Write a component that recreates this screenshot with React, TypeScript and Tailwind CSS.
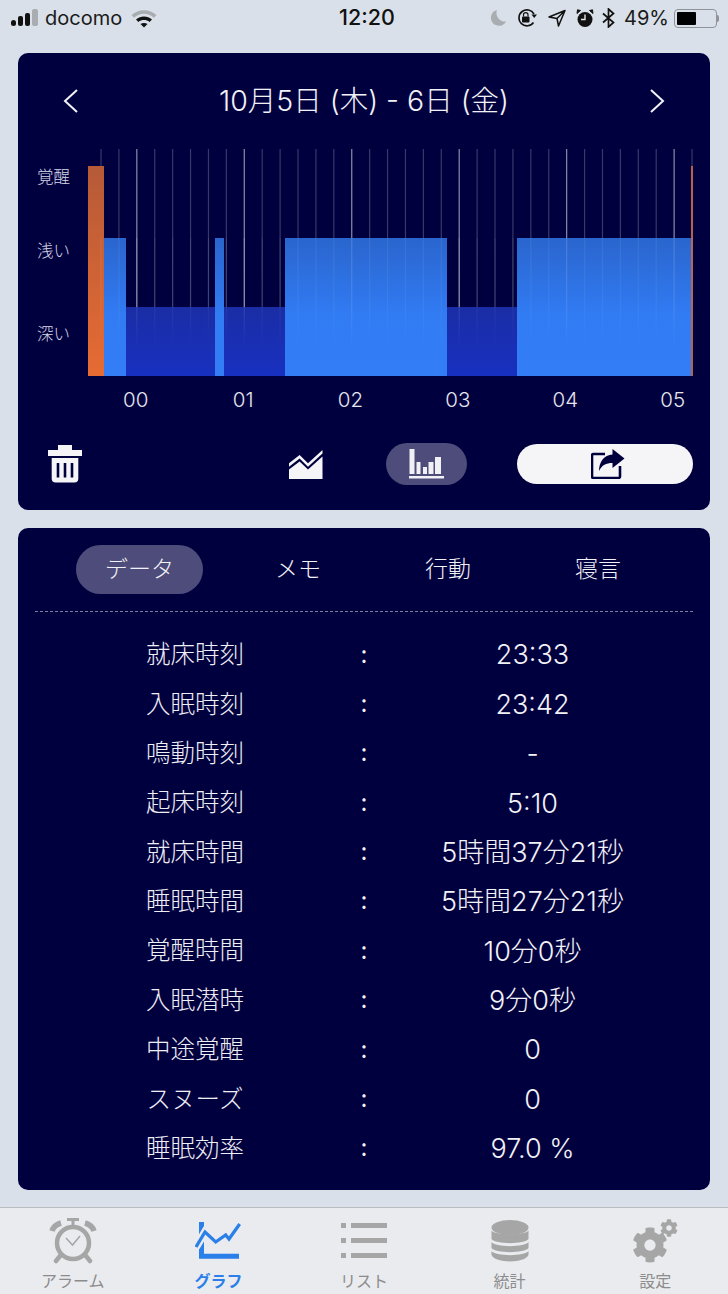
import React from "react";
import { FaCog } from "react-icons/fa";

const font = { fontFamily: '"Inter","Noto Sans CJK JP",sans-serif' };

const lines = Array.from({ length: 34 }, (_, i) => 13 + i * 17.91);

const bars = (
  <>
    <rect x="0" y="17" width="16" height="210" fill="url(#orangeB)" />
    <rect x="16" y="89" width="22" height="138" fill="url(#lightB)" />
    <rect x="38" y="158" width="89" height="69" fill="url(#deepB)" />
    <rect x="127" y="89" width="9" height="138" fill="url(#lightB)" />
    <rect x="136" y="158" width="61" height="69" fill="url(#deepB)" />
    <rect x="197" y="89" width="162" height="138" fill="url(#lightB)" />
    <rect x="359" y="158" width="70" height="69" fill="url(#deepB)" />
    <rect x="429" y="89" width="174" height="138" fill="url(#lightB)" />
    <rect x="603" y="17" width="2" height="210" fill="#b8604e" />
  </>
);

const Chart = () => (
  <svg width="606" height="227" viewBox="0 0 606 227" className="block shrink-0">
    <defs>
      <linearGradient id="lightB" x1="0" y1="89" x2="0" y2="227" gradientUnits="userSpaceOnUse">
        <stop offset="0" stopColor="#2a65cd" />
        <stop offset="0.55" stopColor="#317bf3" />
        <stop offset="1" stopColor="#337df7" />
      </linearGradient>
      <linearGradient id="deepB" x1="0" y1="158" x2="0" y2="227" gradientUnits="userSpaceOnUse">
        <stop offset="0" stopColor="#1a2da5" />
        <stop offset="1" stopColor="#1830c0" />
      </linearGradient>
      <linearGradient id="orangeB" x1="0" y1="17" x2="0" y2="227" gradientUnits="userSpaceOnUse">
        <stop offset="0" stopColor="#b65a38" />
        <stop offset="1" stopColor="#e66b33" />
      </linearGradient>
      <linearGradient id="fade" x1="0" y1="0" x2="0" y2="227" gradientUnits="userSpaceOnUse">
        <stop offset="0.35" stopColor="#ffffff" stopOpacity="0.07" />
        <stop offset="0.7" stopColor="#ffffff" stopOpacity="0.05" />
        <stop offset="0.88" stopColor="#ffffff" stopOpacity="0" />
      </linearGradient>
      <linearGradient id="fadeB" x1="0" y1="0" x2="0" y2="227" gradientUnits="userSpaceOnUse">
        <stop offset="0.35" stopColor="#ffffff" stopOpacity="0.16" />
        <stop offset="0.7" stopColor="#ffffff" stopOpacity="0.1" />
        <stop offset="0.88" stopColor="#ffffff" stopOpacity="0" />
      </linearGradient>
    </defs>
    {lines.map((x, i) => (
      <line key={i} x1={x} x2={x} y1="0" y2="227" stroke="#ffffff" strokeOpacity={i % 6 === 2 ? 0.55 : 0.22} strokeWidth="1.2" />
    ))}
    {bars}
    {lines.map((x, i) => (
      <line key={i} x1={x} x2={x} y1="89" y2="227" stroke={i % 6 === 2 ? "url(#fadeB)" : "url(#fade)"} strokeWidth="1.2" />
    ))}
  </svg>
);

const rows: [string, string][] = [
  ["就床時刻", "23:33"],
  ["入眠時刻", "23:42"],
  ["鳴動時刻", "-"],
  ["起床時刻", "5:10"],
  ["就床時間", "5時間37分21秒"],
  ["睡眠時間", "5時間27分21秒"],
  ["覚醒時間", "10分0秒"],
  ["入眠潜時", "9分0秒"],
  ["中途覚醒", "0"],
  ["スヌーズ", "0"],
  ["睡眠効率", "97.0 %"],
];

const Chevron = ({ right }: { right?: boolean }) => (
  <svg width="16" height="24" viewBox="0 0 16 24" fill="none" stroke="#f2f2f6" strokeWidth="2">
    <path d={right ? "M2 1 L14 12 L2 23" : "M14 1 L2 12 L14 23"} />
  </svg>
);

const StatusBar = () => (
  <div className="h-[53px] pb-[17px] pl-[11px] pr-[9px] flex items-center justify-between text-[#111]">
    <div className="flex items-center w-[236px]">
      <svg width="28" height="18" viewBox="0 0 28 18">
        <rect x="0" y="11" width="5" height="6" rx="2.5" fill="#111" />
        <rect x="7" y="7" width="5" height="10" rx="2" fill="#111" />
        <rect x="14" y="4" width="5" height="13" rx="2" fill="#111" />
        <rect x="21" y="0" width="6" height="17" rx="2" fill="#a9adb2" />
      </svg>
      <span className="ml-[6px] text-[20px] leading-none font-normal text-[#1a1a1a]">docomo</span>
      <svg width="26" height="19" viewBox="0 0 26 19" className="ml-[9px]">
        <path d="M0.5 6 C7.5 -0.5 18.5 -0.5 25.5 6 L23 8.7 C17 3.4 9 3.4 3 8.7 Z" fill="#a9adb2" />
        <path d="M5 10.5 C9.5 6.5 16.5 6.5 21 10.5 L18.6 13 C15.5 10.4 10.5 10.4 7.4 13 Z" fill="#111" />
        <path d="M9.5 15 C11.5 13.5 14.5 13.5 16.5 15 L13 18.5 Z" fill="#111" />
      </svg>
    </div>
    <div className="text-[21.5px] leading-none font-medium text-[#111]">12:20</div>
    <div className="flex items-center justify-end w-[232px]">
      <svg width="18" height="18" viewBox="0 0 18 18">
        <path d="M8 1 A8 8 0 1 0 17 12.5 A8.5 8.5 0 0 1 8 1 Z" fill="#a9adb2" />
      </svg>
      <svg width="22" height="20" viewBox="0 0 22 20" className="ml-[9px]" fill="none">
        <path d="M17.5 14.5 A8 8 0 1 1 18 6" stroke="#111" strokeWidth="1.6" />
        <path d="M15.5 6.5 L21 6.5 L18.2 10 Z" fill="#111" />
        <rect x="6" y="8.5" width="7.5" height="6" rx="1" fill="#111" />
        <path d="M7.5 8.5 V6.8 A2.2 2.2 0 0 1 12 6.8 V8.5" stroke="#111" strokeWidth="1.2" />
      </svg>
      <svg width="18" height="18" viewBox="0 0 18 18" className="ml-[10px]" fill="none">
        <path d="M17 1.5 L1 8 L9 9.5 L10.5 17 Z M17 1.5 L9 9.5" stroke="#111" strokeWidth="1.5" strokeLinejoin="round" />
      </svg>
      <svg width="18" height="19" viewBox="0 0 18 19" className="ml-[10px]">
        <circle cx="9" cy="10.5" r="7.5" fill="#111" />
        <path d="M9 5.5 V10.5 H5" stroke="#e3e6ec" strokeWidth="1.4" fill="none" />
        <path d="M1 4.5 L4.5 1.5 L1.5 0.8 Z M17 4.5 L13.5 1.5 L16.5 0.8 Z" fill="#111" stroke="#111" />
      </svg>
      <svg width="13" height="20" viewBox="0 0 13 20" className="ml-[8px]" fill="none">
        <path d="M1 5.5 L11.5 14.5 L6.5 19 V1 L11.5 5.5 L1 14.5" stroke="#111" strokeWidth="1.7" />
      </svg>
      <span className="ml-[9px] text-[20px] leading-none text-[#1a1a1a]">49%</span>
      <div className="ml-[5px] w-[45px] h-[19px] flex items-center">
        <div className="w-[43px] h-[19px] rounded-[4px] border border-[#8f9296] p-[2px]">
          <div className="w-[19px] h-full rounded-[1px] bg-black" />
        </div>
        <div className="w-[2px] h-[7px] bg-[#8f9296] rounded-r-[2px]" />
      </div>
    </div>
  </div>
);

const Tab = ({ label, active, children }: { label: string; active?: boolean; children: React.ReactNode }) => (
  <div className="flex flex-col items-center pt-[9px]">
    <div className="h-[48px] flex items-center justify-center">{children}</div>
    <span className={`mt-[5px] text-[16px] leading-[22px] ${active ? "font-bold text-[#2b7fe8]" : "text-[#8c8c8c]"}`}>{label}</span>
  </div>
);

export default function App() {
  return (
    <div style={font} className="w-[728px] h-[1294px] overflow-hidden bg-[#d9e0e9] flex flex-col">
      <StatusBar />
      <div className="mx-[18px] rounded-[10px] bg-[#01003f] pb-[25px]">
        <div className="h-[96px] flex items-center">
          <div className="ml-[45px]"><Chevron /></div>
          <div className="flex-1 text-center text-[28.5px] leading-none font-light text-[#f2f2f6]">10月5日 (木) - 6日 (金)</div>
          <div className="mr-[45px]"><Chevron right /></div>
        </div>
        <div className="flex">
          <div className="w-[70px] flex flex-col pt-[17px] items-start pl-[19px] text-[16.5px] leading-[22px] text-[#d8d8e4] font-light">
            <span>覚醒</span>
            <span className="mt-[52px]">浅い</span>
            <span className="mt-[61px]">深い</span>
          </div>
          <Chart />
        </div>
        <div className="h-[48px] flex items-center pl-[64px] text-[20.5px] font-light text-[#e6e6ee]">
          {["00", "01", "02", "03", "04", "05"].map((h) => (
            <div key={h} className="w-[107.4px] shrink-0 text-center">{h}</div>
          ))}
        </div>
        <div className="mt-[19px] h-[42px] flex items-center">
          <svg width="34" height="38" viewBox="0 0 34 38" className="ml-[30px]">
            <path d="M10 0 H24 V5 H34 V11 H0 V5 H10 Z" fill="#f5f5f7" />
            <path d="M3.7 13 H30.3 V33.5 Q30.3 37.5 26.3 37.5 H7.7 Q3.7 37.5 3.7 33.5 Z" fill="#f5f5f7" />
            <rect x="8.7" y="18" width="2.6" height="14.5" fill="#01003f" />
            <rect x="15.7" y="18" width="2.6" height="14.5" fill="#01003f" />
            <rect x="22.7" y="18" width="2.6" height="14.5" fill="#01003f" />
          </svg>
          <svg width="34" height="29" viewBox="0 0 34 29" className="ml-[207px]">
            <path d="M0 13.3 L10.6 5 L19 13.3 L33.5 0 V3.5 L19 16.8 L10.6 8.5 L0 16.8 Z" fill="#f5f5f7" />
            <path d="M0 19.5 L10.6 11.5 L19 19.5 L33.5 6.5 V29 H0 Z" fill="#f5f5f7" />
          </svg>
          <div className="ml-[63px] w-[81px] h-[42px] rounded-full bg-[#4e4c7a] flex items-center justify-center">
            <svg width="36" height="30" viewBox="0 0 36 30">
              <rect x="0.5" y="0" width="5" height="25" fill="#f0f0f5" />
              <rect x="7.5" y="13" width="4" height="12" fill="#f0f0f5" />
              <rect x="14" y="18" width="4" height="7" fill="#f0f0f5" />
              <rect x="19.5" y="13" width="5" height="12" fill="#f0f0f5" />
              <rect x="26" y="8" width="6" height="17" fill="#f0f0f5" />
              <rect x="0" y="27" width="35" height="2.5" fill="#f0f0f5" />
            </svg>
          </div>
          <div className="ml-[50px] w-[176px] h-[40px] rounded-full bg-[#f5f5f7] flex items-center justify-center pl-[6px]">
            <svg width="34" height="30" viewBox="0 0 34 30">
              <path d="M14 5 H2.5 Q1 5 1 6.5 V27.5 Q1 29 2.5 29 H27 Q29 29 29 27.5 V17" fill="none" stroke="#01003f" strokeWidth="2.6" />
              <path d="M21.5 0 L33.5 9.5 L21.5 19 V14 C15 14 11 16 8 22 C8 13 13 6 21.5 5.5 Z" fill="#01003f" />
            </svg>
          </div>
        </div>
      </div>
      <div className="mx-[18px] mt-[18px] rounded-[10px] bg-[#01003f] pt-[17px] pb-[17px] text-[#f2f2f6]">
        <div className="h-[49px] flex items-center text-[23px] font-light">
          <div className="ml-[58px] w-[127px] h-[49px] rounded-full bg-[#4e4c7a] flex items-center justify-center">データ</div>
          <div className="w-[190px] text-center">メモ</div>
          <div className="w-[110px] text-center">行動</div>
          <div className="w-[190px] text-center">寝言</div>
        </div>
        <div className="mx-[17px] mt-[17px] border-t border-dashed border-[#7f7e9f]" />
        <div className="mt-[18px] flex flex-col">
          {rows.map(([k, v]) => (
            <div key={k} className="h-[49.36px] grid grid-cols-[322px_48px_322px] items-center font-light">
              <div className="pl-[32px] text-center text-[24.5px] text-[#eeeef4]">{k}</div>
              <div className="text-center text-[24px] font-normal">:</div>
              <div className="pr-[33px] pt-[2px] text-center text-[27px]">{v}</div>
            </div>
          ))}
        </div>
      </div>
      <div className="mt-[17px] h-[87px] border-t border-[#b8bcc0] bg-[#e9ebef] grid grid-cols-5">
        <Tab label="アラーム">
          <svg width="48" height="46" viewBox="0 0 48 46" fill="none">
            <circle cx="24" cy="25" r="16" stroke="#a6a6a6" strokeWidth="4.5" />
            <path d="M3 13 Q5 7 12 5 M45 13 Q43 7 36 5" stroke="#a6a6a6" strokeWidth="5.5" />
            <path d="M18 1.5 H30 M24 1 V8" stroke="#a6a6a6" strokeWidth="3" />
            <path d="M11 38 L7 43 M37 38 L41 43" stroke="#a6a6a6" strokeWidth="4.5" strokeLinecap="round" />
            <path d="M17 20 L23.5 27 L31 18" stroke="#a6a6a6" strokeWidth="1.5" />
          </svg>
        </Tab>
        <Tab label="グラフ" active>
          <svg width="46" height="38" viewBox="0 0 46 38" fill="none">
            <path d="M6.5 0 V34.2 H44" stroke="#2b7fe8" strokeWidth="5" />
            <path d="M1 25 L10 10 L20.7 20 L30.7 13 L34 17 L44.7 2" stroke="#e9ebef" strokeWidth="8" />
            <path d="M1 25 L10 10 L20.7 20 L30.7 13 L34 17 L44.7 2" stroke="#2b7fe8" strokeWidth="3.2" />
          </svg>
        </Tab>
        <Tab label="リスト">
          <svg width="46" height="36" viewBox="0 0 46 36" fill="#a6a6a6">
            <rect x="0" y="0" width="5" height="5" /><rect x="10" y="0" width="36" height="5" />
            <rect x="0" y="15" width="5" height="5" /><rect x="10" y="15" width="36" height="5" />
            <rect x="0" y="30" width="5" height="5" /><rect x="10" y="30" width="36" height="5" />
          </svg>
        </Tab>
        <Tab label="統計">
          <svg width="38" height="42" viewBox="0 0 38 42" fill="#a6a6a6">
            <ellipse cx="19" cy="7.5" rx="18.5" ry="7.5" />
            <path d="M0.5 10.5 C4 15.5 34 15.5 37.5 10.5 V19 C34 24.5 4 24.5 0.5 19 Z" />
            <path d="M0.5 22 C4 27.5 34 27.5 37.5 22 V28 C34 33.5 4 33.5 0.5 28 Z" />
            <path d="M0.5 31 C4 36.5 34 36.5 37.5 31 V35 C34 43.5 4 43.5 0.5 35 Z" />
          </svg>
        </Tab>
        <Tab label="設定">
          <div className="relative w-[46px] h-[44px]">
            <FaCog className="absolute left-0 bottom-0 w-[36px] h-[36px] text-[#a6a6a6]" />
            <FaCog className="absolute right-0 top-0 w-[18px] h-[18px] text-[#a6a6a6]" />
          </div>
        </Tab>
      </div>
    </div>
  );
}
